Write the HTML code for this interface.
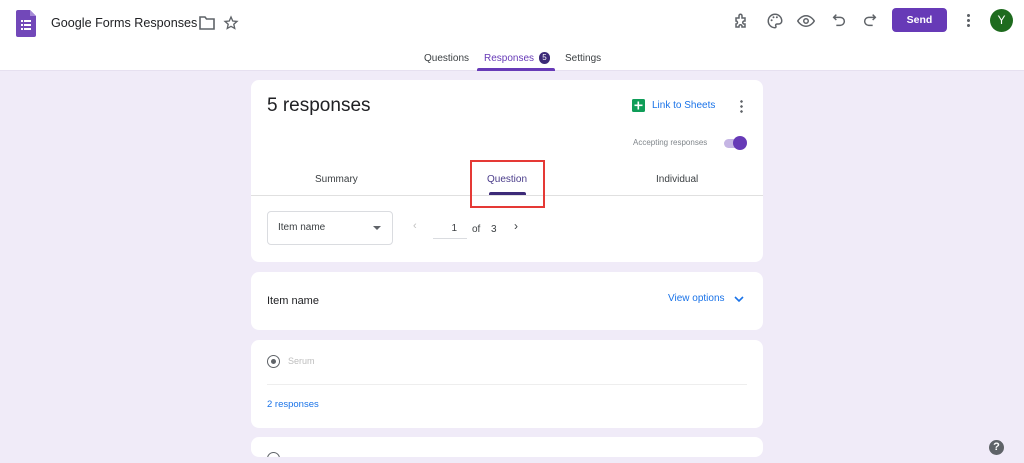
<!DOCTYPE html>
<html><head><style>
*{margin:0;padding:0;box-sizing:border-box}
html,body{width:1024px;height:463px;overflow:hidden}
body{background:#f0ebf8;font-family:"Liberation Sans",Arial,sans-serif;position:relative;color:#202124}
.a{position:absolute}
.hdr{left:0;top:0;width:1024px;height:71px;background:#fff;border-bottom:1px solid #e6e0f0}
.card{position:absolute;left:251px;width:512px;background:#fff;border-radius:8px}
</style></head><body>
<div class="a hdr"></div>
<svg class="a" style="left:16px;top:10px" width="20" height="27" viewBox="0 0 20 27"><path d="M2 0h12l6 6v19a2 2 0 0 1-2 2H2a2 2 0 0 1-2-2V2a2 2 0 0 1 2-2z" fill="#7248b9"/><path d="M14 0l6 6h-6z" fill="#a58ad6"/><g fill="#fff"><rect x="5" y="10" width="2" height="2"/><rect x="8" y="10" width="7" height="2"/><rect x="5" y="14" width="2" height="2"/><rect x="8" y="14" width="7" height="2"/><rect x="5" y="18" width="2" height="2"/><rect x="8" y="18" width="7" height="2"/></g></svg>
<div class="a" style="left:51px;top:16px;font-size:12.6px;color:#202124">Google Forms Responses</div>
<svg class="a" style="left:199px;top:16px" width="16" height="14" viewBox="0 0 16 14"><path d="M1 1h5l1.5 2H15v10H1z" fill="none" stroke="#5f6368" stroke-width="1.6"/></svg>
<svg class="a" style="left:223px;top:15px" width="16" height="16" viewBox="0 0 24 24"><path d="M12 3l2.6 6 6.4.6-4.8 4.3 1.4 6.3L12 17l-5.6 3.2 1.4-6.3L3 9.6 9.4 9z" fill="none" stroke="#5f6368" stroke-width="2"/></svg>
<svg class="a" style="left:733px;top:12px" width="18" height="18" viewBox="0 0 24 24"><path d="M4 8h4V5a2 2 0 0 1 4 0v3h4v4h-1a2 2 0 0 0 0 4h1v4h-4v-1a2 2 0 0 0-4 0v1H4v-4a2 2 0 0 0 0-4z" fill="none" stroke="#5f6368" stroke-width="2"/></svg>
<svg class="a" style="left:766px;top:12px" width="18" height="18" viewBox="0 0 24 24"><path d="M12 3a9 9 0 0 0 0 18c1.5 0 1.5-1.5 1-2.5-.6-1.2.2-2.5 1.6-2.5H17a4 4 0 0 0 4-4c0-5-4-9-9-9z" fill="none" stroke="#5f6368" stroke-width="2"/><circle cx="7.5" cy="11" r="1.3" fill="#5f6368"/><circle cx="10" cy="7" r="1.3" fill="#5f6368"/><circle cx="14.5" cy="7" r="1.3" fill="#5f6368"/></svg>
<svg class="a" style="left:797px;top:12px" width="18" height="18" viewBox="0 0 24 24"><path d="M1 12s4-7 11-7 11 7 11 7-4 7-11 7S1 12 1 12z" fill="none" stroke="#5f6368" stroke-width="2"/><circle cx="12" cy="12" r="3" fill="none" stroke="#5f6368" stroke-width="2"/></svg>
<svg class="a" style="left:831px;top:12px" width="16" height="16" viewBox="0 0 24 24"><path d="M8 4L4 8l4 4M4 8h10a6 6 0 0 1 0 12H8" fill="none" stroke="#5f6368" stroke-width="2.2"/></svg>
<svg class="a" style="left:862px;top:12px" width="16" height="16" viewBox="0 0 24 24"><path d="M16 4l4 4-4 4M20 8H10a6 6 0 0 0 0 12h6" fill="none" stroke="#5f6368" stroke-width="2.2"/></svg>
<div class="a" style="left:892px;top:8px;width:55px;height:24px;background:#673ab7;border-radius:4px;color:#fff;font-size:10.5px;font-weight:bold;text-align:center;line-height:24px">Send</div>
<div class="a" style="left:967px;top:13px;width:3px;height:14px;background:radial-gradient(circle,#5f6368 1.4px,transparent 1.6px) 0 0/3px 5px"></div>
<div class="a" style="left:990px;top:9px;width:23px;height:23px;border-radius:50%;background:#1e6b1e;color:#fff;font-size:12px;text-align:center;line-height:23px">Y</div>
<div class="a" style="left:424px;top:53px;font-size:10px;color:#3c4043">Questions</div>
<div class="a" style="left:484px;top:53px;font-size:10px;color:#673ab7">Responses</div>
<div class="a" style="left:539px;top:52px;width:11px;height:12px;border-radius:6px;background:#3c2a78;color:#fff;font-size:8px;text-align:center;line-height:12px">5</div>
<div class="a" style="left:565px;top:53px;font-size:10px;color:#3c4043">Settings</div>
<div class="a" style="left:477px;top:68px;width:78px;height:3px;background:#673ab7;border-radius:2px 2px 0 0"></div>

<div class="card" style="top:80px;height:182px">
 <div class="a" style="left:16px;top:15px;font-size:19px;color:#202124">5 responses</div>
 <svg class="a" style="left:381px;top:19px" width="13" height="13" viewBox="0 0 13 13"><rect width="13" height="13" rx="1.5" fill="#0f9d58"/><rect x="2.5" y="5.5" width="8" height="1.6" fill="#fff"/><rect x="5.5" y="2.5" width="1.6" height="8" fill="#fff"/></svg>
 <div class="a" style="left:401px;top:20px;font-size:10px;color:#1a73e8">Link to Sheets</div>
 <div class="a" style="left:489px;top:19px;width:3px;height:14px;background:radial-gradient(circle,#5f6368 1.2px,transparent 1.4px) 0 0/3px 5px"></div>
 <div class="a" style="left:382px;top:58px;font-size:8px;color:#80868b">Accepting responses</div>
 <div class="a" style="left:473px;top:59px;width:20px;height:9px;border-radius:5px;background:#c5b5e4"></div>
 <div class="a" style="left:482px;top:56px;width:14px;height:14px;border-radius:50%;background:#673ab7"></div>
 <div class="a" style="left:64px;top:94px;font-size:10px;color:#3c4043">Summary</div>
 <div class="a" style="left:236px;top:94px;font-size:10px;color:#4a3c8a">Question</div>
 <div class="a" style="left:405px;top:94px;font-size:10px;color:#3c4043">Individual</div>
 <div class="a" style="left:238px;top:112px;width:37px;height:3px;background:#3c2a78;border-radius:2px 2px 0 0"></div>
 <div class="a" style="left:0;top:115px;width:512px;height:1px;background:#e0e0e0"></div>
 <div class="a" style="left:219px;top:80px;width:75px;height:48px;border:2px solid #e53935"></div>
 <div class="a" style="left:16px;top:131px;width:126px;height:34px;border:1px solid #dadce0;border-radius:4px"></div>
 <div class="a" style="left:27px;top:142px;font-size:10px;color:#3c4043">Item name</div>
 <div class="a" style="left:122px;top:146px;width:0;height:0;border-left:4px solid transparent;border-right:4px solid transparent;border-top:4px solid #5f6368"></div>
 <div class="a" style="left:162px;top:140px;font-size:11px;color:#c0c0c0">‹</div>
 <div class="a" style="left:182px;top:143px;width:34px;height:16px;border-bottom:1px solid #dadce0;text-align:right;font-size:10px;color:#3c4043;padding-right:10px">1</div>
 <div class="a" style="left:221px;top:144px;font-size:10px;color:#3c4043">of</div>
 <div class="a" style="left:240px;top:144px;font-size:10px;color:#3c4043">3</div>
 <div class="a" style="left:263px;top:139px;font-size:12px;color:#3c4043">›</div>
</div>

<div class="card" style="top:272px;height:58px">
 <div class="a" style="left:16px;top:23px;font-size:11px;color:#202124">Item name</div>
 <div class="a" style="left:417px;top:21px;font-size:10px;color:#1a73e8">View options</div>
 <svg class="a" style="left:483px;top:24px" width="10" height="7" viewBox="0 0 10 7"><path d="M1 1l4 4 4-4" fill="none" stroke="#1a73e8" stroke-width="1.6"/></svg>
</div>

<div class="card" style="top:340px;height:88px">
 <div class="a" style="left:16px;top:15px;width:13px;height:13px;border:1.5px solid #5f6368;border-radius:50%"></div>
 <div class="a" style="left:20px;top:19px;width:5px;height:5px;background:#5f6368;border-radius:50%"></div>
 <div class="a" style="left:37px;top:16px;font-size:9px;color:#bdbdbd">Serum</div>
 <div class="a" style="left:16px;top:44px;width:480px;height:1px;background:#eee"></div>
 <div class="a" style="left:16px;top:59px;font-size:9.5px;color:#1a73e8">2 responses</div>
</div>

<div class="card" style="top:437px;height:20px">
 <div class="a" style="left:16px;top:15px;width:13px;height:13px;border:1.5px solid #5f6368;border-radius:50%"></div>
</div>
<div class="a" style="left:0;top:457px;width:1024px;height:6px;background:#f0ebf8"></div>
<div class="a" style="left:989px;top:440px;width:15px;height:15px;border-radius:50%;background:#5f6368;color:#fff;font-size:11px;font-weight:bold;text-align:center;line-height:15px">?</div>
</body></html>
